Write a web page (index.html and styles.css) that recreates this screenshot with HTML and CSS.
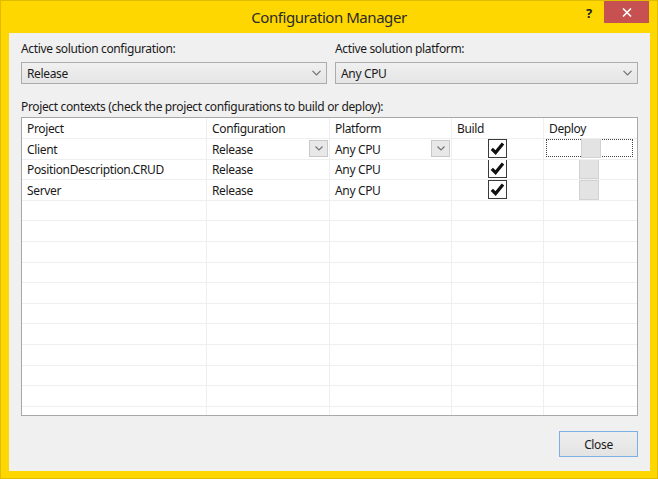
FILE: index.html
```html
<!DOCTYPE html>
<html>
<head>
<meta charset="utf-8">
<link rel="stylesheet" href="styles.css">
</head>
<body>
<div class="window">
  <div class="titlebar">
    <div class="title">Configuration Manager</div>
    <div class="controls">
      <div class="help">?</div>
      <div class="close"><svg width="10" height="9" viewBox="0 0 10 9"><path d="M1 0.5 L9 8.5 M9 0.5 L1 8.5" stroke="#fff" stroke-width="1.6" fill="none"/></svg></div>
    </div>
  </div>
  <div class="client">
    <div class="top">
      <div class="field">
        <div class="label">Active solution configuration:</div>
        <div class="combo"><span>Release</span><svg class="chev" width="9" height="6" viewBox="0 0 9 6"><path d="M0.5 0.8 L4.5 4.8 L8.5 0.8" stroke="#707070" stroke-width="1.2" fill="none"/></svg></div>
      </div>
      <div class="field">
        <div class="label">Active solution platform:</div>
        <div class="combo"><span>Any CPU</span><svg class="chev" width="9" height="6" viewBox="0 0 9 6"><path d="M0.5 0.8 L4.5 4.8 L8.5 0.8" stroke="#707070" stroke-width="1.2" fill="none"/></svg></div>
      </div>
    </div>
    <div class="ctx-label">Project contexts (check the project configurations to build or deploy):</div>
    <div class="grid">
      <div class="row head">
        <div class="cell">Project</div>
        <div class="cell">Configuration</div>
        <div class="cell">Platform</div>
        <div class="cell">Build</div>
        <div class="cell">Deploy</div>
      </div>
      <div class="row">
        <div class="cell txt">Client</div>
        <div class="cell txt"><span class="grow">Release</span><span class="cbtn"><svg width="8" height="5" viewBox="0 0 8 5"><path d="M0.5 0.5 L4 4 L7.5 0.5" stroke="#707070" stroke-width="1.1" fill="none"/></svg></span></div>
        <div class="cell txt"><span class="grow">Any CPU</span><span class="cbtn"><svg width="8" height="5" viewBox="0 0 8 5"><path d="M0.5 0.5 L4 4 L7.5 0.5" stroke="#707070" stroke-width="1.1" fill="none"/></svg></span></div>
        <div class="cell center"><span class="chk"><svg width="15" height="13" viewBox="0 0 15 13"><path d="M1.8 6.8 L5.6 10.6 L13 1.6" stroke="#111" stroke-width="3.2" fill="none"/></svg></span></div>
        <div class="cell deploy"><div class="focus"><span class="dis"></span></div></div>
      </div>
      <div class="row">
        <div class="cell txt">PositionDescription.CRUD</div>
        <div class="cell txt">Release</div>
        <div class="cell txt">Any CPU</div>
        <div class="cell center"><span class="chk"><svg width="15" height="13" viewBox="0 0 15 13"><path d="M1.8 6.8 L5.6 10.6 L13 1.6" stroke="#111" stroke-width="3.2" fill="none"/></svg></span></div>
        <div class="cell center dcell"><span class="dis"></span></div>
      </div>
      <div class="row">
        <div class="cell txt">Server</div>
        <div class="cell txt">Release</div>
        <div class="cell txt">Any CPU</div>
        <div class="cell center"><span class="chk"><svg width="15" height="13" viewBox="0 0 15 13"><path d="M1.8 6.8 L5.6 10.6 L13 1.6" stroke="#111" stroke-width="3.2" fill="none"/></svg></span></div>
        <div class="cell center dcell"><span class="dis"></span></div>
      </div>
      <div class="row"><div class="cell"></div><div class="cell"></div><div class="cell"></div><div class="cell"></div><div class="cell"></div></div>
      <div class="row"><div class="cell"></div><div class="cell"></div><div class="cell"></div><div class="cell"></div><div class="cell"></div></div>
      <div class="row"><div class="cell"></div><div class="cell"></div><div class="cell"></div><div class="cell"></div><div class="cell"></div></div>
      <div class="row"><div class="cell"></div><div class="cell"></div><div class="cell"></div><div class="cell"></div><div class="cell"></div></div>
      <div class="row"><div class="cell"></div><div class="cell"></div><div class="cell"></div><div class="cell"></div><div class="cell"></div></div>
      <div class="row"><div class="cell"></div><div class="cell"></div><div class="cell"></div><div class="cell"></div><div class="cell"></div></div>
      <div class="row"><div class="cell"></div><div class="cell"></div><div class="cell"></div><div class="cell"></div><div class="cell"></div></div>
      <div class="row"><div class="cell"></div><div class="cell"></div><div class="cell"></div><div class="cell"></div><div class="cell"></div></div>
      <div class="row"><div class="cell"></div><div class="cell"></div><div class="cell"></div><div class="cell"></div><div class="cell"></div></div>
      <div class="row"><div class="cell"></div><div class="cell"></div><div class="cell"></div><div class="cell"></div><div class="cell"></div></div>
      <div class="row"><div class="cell"></div><div class="cell"></div><div class="cell"></div><div class="cell"></div><div class="cell"></div></div>
    </div>
    <div class="footer"><button class="btn">Close</button></div>
  </div>
</div>
</body>
</html>
```

FILE: styles.css
```css
html, body { margin: 0; padding: 0; background: #fff; }
body { font-family: "Segoe UI", "Noto Sans", sans-serif; font-size: 12px; letter-spacing: -0.35px; color: #1a1a1a; }

.window {
  width: 658px; height: 479px; box-sizing: border-box;
  background: #FFD700; border: 1px solid #E0BC00;
  display: flex; flex-direction: column;
}

.titlebar {
  height: 32px; flex: none;
  display: grid; grid-template-columns: 1fr auto 1fr; align-items: start;
}
.title { grid-column: 2; line-height: 32px; font-size: 15px; letter-spacing: -0.45px; color: #2a2a2a; }
.controls { grid-column: 3; justify-self: end; display: flex; align-items: flex-start; margin-right: 8px; }
.help { width: 30px; height: 22px; line-height: 24px; text-align: center; font-weight: bold; font-size: 13px; color: #222; }
.close {
  width: 45px; height: 22px; background: #C75050;
  display: flex; align-items: center; justify-content: center;
}

.client {
  flex: 1; margin: 0 7px 7px 8px; background: #F0F0F0;
  padding: 8px 12px 0 12px; display: flex; flex-direction: column;
}
.top { display: grid; grid-template-columns: 306px 1fr; column-gap: 8px; }
.label { line-height: 15px; margin-bottom: 6px; }
.combo {
  height: 22px; box-sizing: border-box; border: 1px solid #ACACAC;
  background: linear-gradient(#F0F0F0, #E5E5E5);
  display: flex; align-items: center; justify-content: space-between;
  padding: 0 5px 0 5px;
}
.ctx-label { margin-top: 15px; line-height: 15px; margin-bottom: 3px; }

.grid {
  height: 299px; box-sizing: border-box; border: 1px solid #A8A8A8;
  background: #fff; overflow: hidden;
}
.row {
  display: grid; grid-template-columns: 185px 123px 122px 92px 1fr;
  height: 20.6px;
}
.row.head { height: 21px; }
.cell {
  box-sizing: border-box; border-right: 1px solid #EFEFEF; border-bottom: 1px solid #EFEFEF;
  padding-left: 5px; display: flex; align-items: center; white-space: nowrap; overflow: hidden;
}
.cell.txt { padding-top: 1px; }
.cell:last-child { border-right: none; }
.cell.center { justify-content: center; padding-left: 0; }
.grow { flex: 1; }
.cbtn {
  width: 19px; height: 17px; box-sizing: border-box; margin-right: 1px; margin-top: -1px;
  border: 1px solid #C8C8C8; background: #E8E8E8;
  display: flex; align-items: center; justify-content: center;
}
.chk {
  width: 19px; height: 19px; box-sizing: border-box; border: 1px solid #3a3a3a; background: #fff;
  display: flex; align-items: center; justify-content: center; margin-top: -1px;
}
.dcell { padding-left: 0; padding-right: 3px; }
.dis {
  width: 20px; height: 20px; box-sizing: border-box; background: #E3E3E3; border: 1px solid #D2D2D2;
}
.deploy { padding: 0 4px 0 2px; }
.focus {
  flex: 1; height: 18px; box-sizing: border-box; border: 1px dotted #444;
  display: flex; justify-content: center; align-items: center; margin-top: -1px;
}
.focus .dis { margin-left: 2px; }

.footer { display: flex; justify-content: flex-end; padding-top: 15px; }
.btn {
  width: 79px; height: 26px; box-sizing: border-box;
  border: 1px solid #7AB0E6; background: linear-gradient(#EEEEEE, #E3E3E3);
  font-family: inherit; font-size: 12px; letter-spacing: inherit; color: #1a1a1a; padding: 0;
}
```
